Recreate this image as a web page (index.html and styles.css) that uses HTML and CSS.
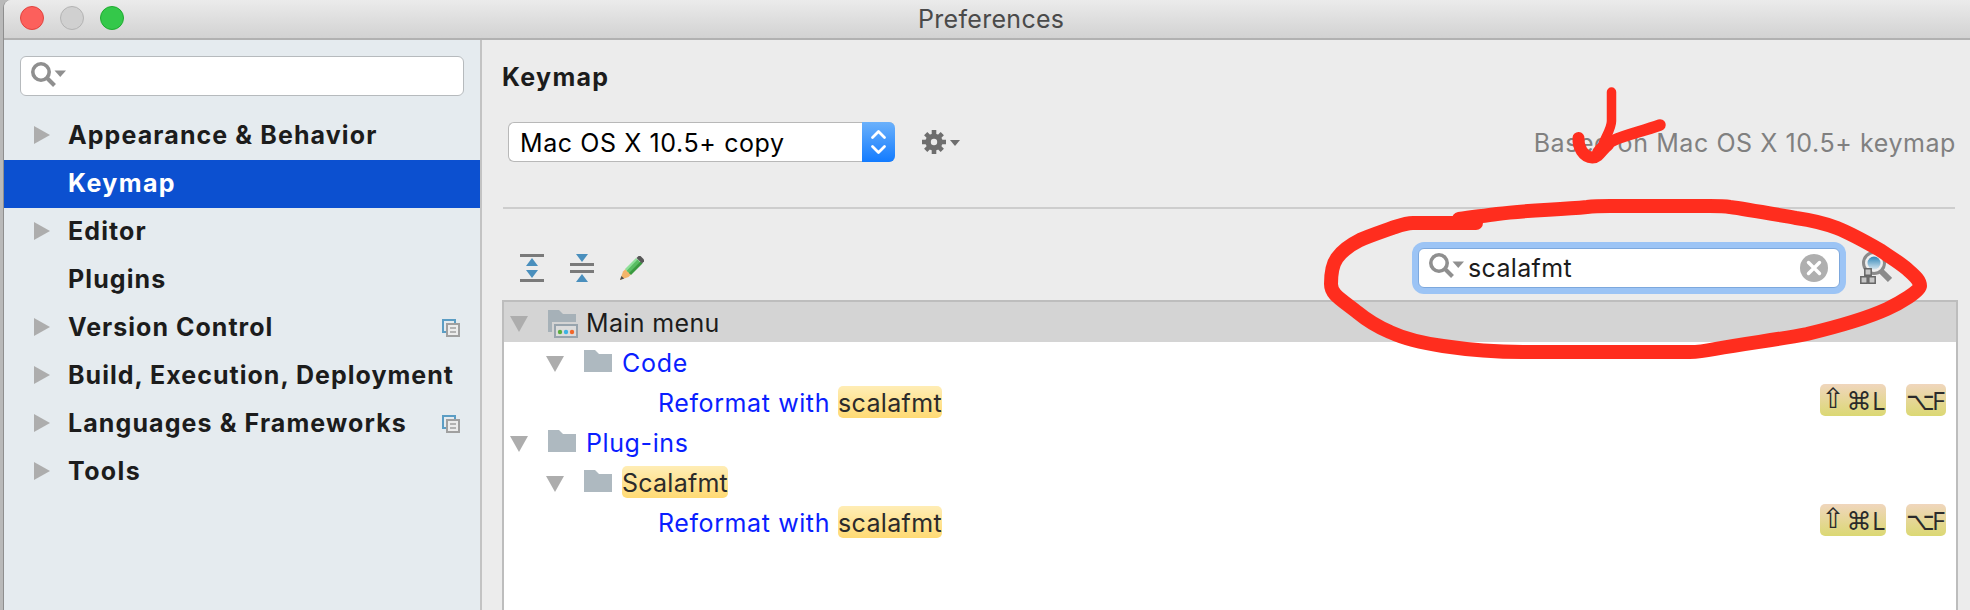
FILE: index.html
```html
<!DOCTYPE html>
<html lang="en">
<head>
<meta charset="utf-8">
<title>Preferences</title>
<link rel="stylesheet" href="styles.css">
</head>
<body>
<div class="window">
  <header class="titlebar">
    <div class="lights"><i class="light close"></i><i class="light minimize"></i><i class="light zoom"></i></div>
    <span class="title">Preferences</span>
  </header>
  <div class="body">
    <aside class="sidebar">
      <div class="side-search">
        <svg width="36" height="26" viewBox="0 0 36 26"><circle cx="10" cy="10" r="8.2" fill="none" stroke="#8f8f8f" stroke-width="3.6"/><path d="M15.5 15.5 23.5 23.5" stroke="#8f8f8f" stroke-width="4"/><path d="M23.5 8.5h11.5l-5.75 6.5z" fill="#8f8f8f"/></svg>
      </div>
      <nav class="nav">
        <div class="item"><i class="arrow"></i><span class="label">Appearance &amp; Behavior</span></div>
        <div class="item selected"><i class="arrow none"></i><span class="label wide">Keymap</span></div>
        <div class="item"><i class="arrow"></i><span class="label">Editor</span></div>
        <div class="item"><i class="arrow none"></i><span class="label">Plugins</span></div>
        <div class="item"><i class="arrow"></i><span class="label snug">Version Control</span><svg class="copy" width="18" height="18" viewBox="0 0 18 18"><path d="M4 13H1V1h12v3" fill="none" stroke="#5b9dc4" stroke-width="2"/><path d="M5 5h12v12H5z" fill="#ececec" stroke="#a0a0a0" stroke-width="2"/><path d="M8 9h6M8 13h6" stroke="#a0a0a0" stroke-width="1.6"/></svg></div>
        <div class="item"><i class="arrow"></i><span class="label snug">Build, Execution, Deployment</span></div>
        <div class="item"><i class="arrow"></i><span class="label">Languages &amp; Frameworks</span><svg class="copy" width="18" height="18" viewBox="0 0 18 18"><path d="M4 13H1V1h12v3" fill="none" stroke="#5b9dc4" stroke-width="2"/><path d="M5 5h12v12H5z" fill="#ececec" stroke="#a0a0a0" stroke-width="2"/><path d="M8 9h6M8 13h6" stroke="#a0a0a0" stroke-width="1.6"/></svg></div>
        <div class="item"><i class="arrow"></i><span class="label wide">Tools</span></div>
      </nav>
    </aside>
    <main class="content">
      <h1 class="heading">Keymap</h1>
      <div class="scheme">
        <div class="combo"><span class="combo-text">Mac OS X 10.5+ copy</span><span class="stepper"><svg width="33" height="40" viewBox="0 0 33 40"><path d="M10.5 15.500 16.500 9.500 22.500 15.500M10.500 24.500 16.500 30.500 22.500 24.500" fill="none" stroke="#fff" stroke-width="2.800" stroke-linecap="round" stroke-linejoin="round"/></svg></span></div>
        <svg class="gear" width="40" height="26" viewBox="0 0 40 26"><g stroke="#6e6e6e" stroke-width="4.600"><path d="M13 1v24M1 13h24M4.700 4.700l16.600 16.600M4.700 21.300 21.300 4.700"/></g><circle cx="13" cy="13" r="8.600" fill="#6e6e6e"/><circle cx="13" cy="13" r="3.200" fill="#ececec"/><path d="M29 11h10l-5 6z" fill="#6e6e6e"/></svg>
        <span class="based">Based on Mac OS X 10.5+ keymap</span>
      </div>
      <div class="rule"></div>
      <div class="toolbar">
        <svg width="24" height="28" viewBox="0 0 24 28"><path d="M0 1.500h24M0 26.500h24" stroke="#7a7a7a" stroke-width="3"/><path d="M6 12h12L12 4zM6 16h12l-6 8z" fill="#4a8fbd"/></svg>
        <svg width="24" height="28" viewBox="0 0 24 28"><path d="M0 10.500h24M0 17.500h24" stroke="#7a7a7a" stroke-width="3"/><path d="M6 0h12l-6 8zM6 28h12l-6-8z" fill="#4a8fbd"/></svg>
        <svg width="24" height="24" viewBox="0 0 24 24"><path d="M0 24 3 15.500 5.500 13 11 18.500 8.500 21z" fill="#f4b56a"/><path d="M0 24l1.400-4L4.200 22.500z" fill="#505050"/><path d="M5 13 16 2l3 3L8 16z" fill="#8fe09a"/><path d="M6.700 14.700 17.500 3.500l3.500 3.500L10 18z" fill="#59bd62"/><path d="M9 17 20.500 5.500l2 2L11 19z" fill="#3a9a40"/><path d="M16.500 2 18.500 0h2L24 3.500v2L22 7.500z" fill="#575757"/></svg>
        <div class="find">
          <svg class="mag" width="36" height="26" viewBox="0 0 36 26"><circle cx="10" cy="10" r="8.200" fill="none" stroke="#8f8f8f" stroke-width="3.600"/><path d="M15.500 15.500 23.500 23.500" stroke="#8f8f8f" stroke-width="4"/><path d="M23.500 8.500h11.500l-5.750 6.500z" fill="#8f8f8f"/></svg>
          <span class="query">scalafmt</span>
          <svg width="28" height="28" viewBox="0 0 28 28"><circle cx="14" cy="14" r="14" fill="#afafaf"/><path d="M8.500 8.500l11 11M19.500 8.500l-11 11" stroke="#fff" stroke-width="3.400" stroke-linecap="round"/></svg>
        </div>
        <svg class="by-key" width="32" height="32" viewBox="0 0 32 32"><path d="M21 19l9 9" stroke="#8a8a8a" stroke-width="6"/><circle cx="14" cy="11" r="10.500" fill="#eee" stroke="#8a8a8a" stroke-width="3"/><circle cx="14" cy="11" r="6.500" fill="url(#lens)"/><g fill="#c6c6c6" stroke="#666" stroke-width="1.500"><path d="M4.800 16.800h6.400v6.400H4.800zM.8 24.800h6.400v6.400H.8zM8.800 24.800h6.400v6.400H8.800z"/></g><defs><linearGradient id="lens" x2="0" y2="1"><stop offset=".1" stop-color="#3f8fbd"/><stop offset="1" stop-color="#d5e6ef"/></linearGradient></defs></svg>
      </div>
      <div class="tree">
        <div class="row head"><i class="open"></i><svg class="folder" width="30" height="28" viewBox="0 0 30 28"><path d="M0 0h11l4 4h13v8H4v10H0z" fill="#a6b1b8"/><path d="M7 15h22v12H7z" fill="#dcdcdc" stroke="#98a4ad" stroke-width="2"/><circle cx="12" cy="22" r="2.200" fill="#5aae3c"/><circle cx="18" cy="22" r="2.200" fill="#3eb2e2"/><circle cx="24" cy="22" r="2.200" fill="#f2672a"/></svg><span class="name n1">Main menu</span></div>
        <div class="row d1"><i class="open"></i><svg class="folder" width="30" height="28" viewBox="0 0 30 28"><path d="M0 0h11l4 4h13v18H0z" fill="#aeb9c0"/></svg><span class="name">Code</span></div>
        <div class="row d2"><span class="name action">Reformat with</span><mark class="m1">scalafmt</mark><span class="keys"><kbd class="k1"><span class="sh">⇧</span><span class="cm">⌘</span><span class="lt">L</span></kbd><kbd class="k2"><span class="op">⌥</span><span class="lt">F</span></kbd></span></div>
        <div class="row"><i class="open"></i><svg class="folder" width="30" height="28" viewBox="0 0 30 28"><path d="M0 0h11l4 4h13v18H0z" fill="#aeb9c0"/></svg><span class="name n4">Plug-ins</span></div>
        <div class="row d1"><i class="open"></i><svg class="folder" width="30" height="28" viewBox="0 0 30 28"><path d="M0 0h11l4 4h13v18H0z" fill="#aeb9c0"/></svg><mark class="m2">Scalafmt</mark></div>
        <div class="row d2"><span class="name action">Reformat with</span><mark class="m1">scalafmt</mark><span class="keys"><kbd class="k1"><span class="sh">⇧</span><span class="cm">⌘</span><span class="lt">L</span></kbd><kbd class="k2"><span class="op">⌥</span><span class="lt">F</span></kbd></span></div>
      </div>
    </main>
  </div>
</div>
<svg class="marker" width="1970" height="610" viewBox="0 0 1970 610"><g fill="none" stroke="#ff2d1e" stroke-linecap="round" stroke-linejoin="round"><path stroke-width="14" d="M1476 223H1413C1406 223 1401 225 1392 228 1378 233 1369 236 1360 240 1350 245 1342 251 1337 258 1332 265 1331 273 1331 284 1331 294 1339 298 1357 312 1368 321 1378 327 1390 332 1405 339 1422 343 1443 346 1470 350 1495 352 1523 352H1690C1700 352 1705 351 1715 349 1747 343 1777 340 1807 334 1836 327 1863 320 1887 309 1900 303 1920 291 1920 286 1920 280 1915 276 1907 269 1899 262 1890 257 1880 250 1866 242 1852 234 1837 228 1824 223 1810 220 1796 218 1773 214 1745 209 1730 207 1724 206 1720 206 1710 206H1610C1600 206 1595 206 1587 207 1557 210 1527 210 1497 214 1483 216 1472 217 1459 219"/><path stroke-width="9.500" d="M1611.500 92V121C1611.500 130 1604 138 1601 150"/><path stroke-width="12" d="M1578.500 138C1578 147 1583 157 1592.500 157.500 1599 157.500 1602 149 1608 145"/><path stroke-width="11.500" d="M1598 152C1608 138 1632 135 1660 125"/></g></svg>
</body>
</html>
```
FILE: styles.css
```css
* { box-sizing: border-box; }
body { margin: 0; width: 1970px; height: 610px; overflow: hidden; position: relative; background: #b9b9b9; font-family: Inter, "Open Sans", sans-serif; font-size: 25px; color: #1c1c1c; }
svg { display: block; flex: none; }
i { display: block; flex: none; }
.window { height: 610px; margin-left: 3px; border-left: 1px solid #8e8e8e; border-top-left-radius: 8px; overflow: hidden; background: #ececec; display: flex; flex-direction: column; }
.titlebar { height: 40px; flex: none; display: flex; align-items: center; background: linear-gradient(#ebebeb, #d2d2d2); border-bottom: 2px solid #b1b1b1; }
.lights { display: flex; gap: 16px; padding: 0 0 2px 16px; width: 914px; }
.light { width: 24px; height: 24px; border-radius: 50%; border: 1px solid; }
.close { background: #fc605c; border-color: #e0443f; }
.minimize { background: #d0d0d0; border-color: #b3b3b3; }
.zoom { background: #34c84a; border-color: #1fab30; }
.title { color: #4a4a4a; letter-spacing: .3px; }
.body { flex: 1; display: flex; min-height: 0; }
.sidebar { width: 478px; flex: none; background: #e5ebef; border-right: 2px solid #c3c3c3; padding-top: 16px; }
.side-search { margin: 0 16px; height: 40px; background: #fff; border: 1px solid #b6babd; border-radius: 6px; padding: 5px 10px; }
.nav { margin-top: 16px; }
.item { height: 48px; display: flex; align-items: center; padding: 0 20px 0 30px; font-weight: 700; }
.selected { background: #0c50d0; color: #fff; }
.arrow { width: 16px; height: 18px; background: #adadad; clip-path: polygon(0 0, 100% 50%, 0 100%); margin-top: -2px; }
.arrow.none { background: none; }
.label { margin-left: 18px; padding-bottom: 2px; white-space: nowrap; letter-spacing: 1.1px; }
.label.wide { letter-spacing: 1.4px; }
.label.snug { letter-spacing: 1.02px; }
.copy { margin-left: auto; margin-top: -1px; }
.content { flex: 1; min-width: 0; padding: 20px 12px 0 20px; display: flex; flex-direction: column; }
.heading { margin: 0; font-size: 25px; line-height: 34px; height: 62px; font-weight: 700; letter-spacing: 1.3px; }
.scheme { display: flex; align-items: center; height: 40px; margin-left: 6px; }
.combo { width: 387px; height: 40px; display: flex; background: #fff; border: 1px solid #b8b8b8; border-right: 0; border-radius: 6px; color: #000; }
.combo-text { flex: 1; padding-left: 11px; line-height: 40px; letter-spacing: .6px; }
.stepper { width: 33px; height: 40px; margin-top: -1px; border-radius: 0 6px 6px 0; background: linear-gradient(#6bb1fb, #127bff); }
.gear { margin-left: 26px; }
.based { margin-left: auto; margin-right: 2px; padding-top: 2px; color: #808080; letter-spacing: .58px; }
.rule { height: 2px; background: #cdcdcd; margin: 45px 3px 0 1px; }
.toolbar { height: 91px; display: flex; align-items: center; gap: 26px; padding: 27px 0 0 18px; }
.find { width: 422px; height: 40px; margin-left: auto; background: #fff; border: 1px solid #7da8dd; border-radius: 6px; box-shadow: 0 0 0 6px #9cc4f5; display: flex; align-items: center; padding: 0 11px 0 10px; }
.mag { margin-top: -4px; }
.query { flex: 1; padding-left: 3px; letter-spacing: .35px; }
.by-key { margin: 0 66px 0 -6px; }
.tree { flex: 1; border: 2px solid #bdbdbd; border-bottom: 0; background: #fff; }
.row { height: 40px; display: flex; align-items: center; padding-left: 6px; }
.head { background: #d4d4d4; }
.d1 { padding-left: 42px; }
.d2 { padding-left: 146px; }
.open { width: 18px; height: 16px; background: #adadad; clip-path: polygon(0 0, 100% 0, 50% 100%); margin-top: 4px; }
.folder { margin: 4px 0 0 20px; }
.name { margin-left: 8px; padding-top: 2px; white-space: nowrap; color: #0a1eff; letter-spacing: .75px; }
.name.n1 { color: #1c1c1c; letter-spacing: .35px; }
.name.n4 { letter-spacing: .6px; }
.name.action { width: 180px; letter-spacing: .6px; }
mark { height: 32px; line-height: 34px; border-radius: 5px; background: linear-gradient(#ffedb5, #ffda74); color: #2b2b2b; letter-spacing: .35px; }
.m2 { margin-left: 8px; letter-spacing: .25px; }
.keys { margin-left: auto; display: flex; gap: 20px; padding: 0 10px 4px 0; }
kbd { height: 32px; line-height: 32px; border-radius: 5px; background: linear-gradient(#f0d6bd, #dbd873); font-family: "Open Sans", "DejaVu Sans", sans-serif; font-size: 25px; display: flex; color: #2b2b2b; }
kbd span { flex: none; }
.k1 { width: 66px; }
.k2 { width: 40px; }
.sh, .cm, .op { width: 26px; text-align: center; }
.sh { font-family: "DejaVu Sans", sans-serif; font-size: 28px; line-height: 30px; }
.lt { width: 14px; }
.marker { position: absolute; left: 0; top: 0; }
```
